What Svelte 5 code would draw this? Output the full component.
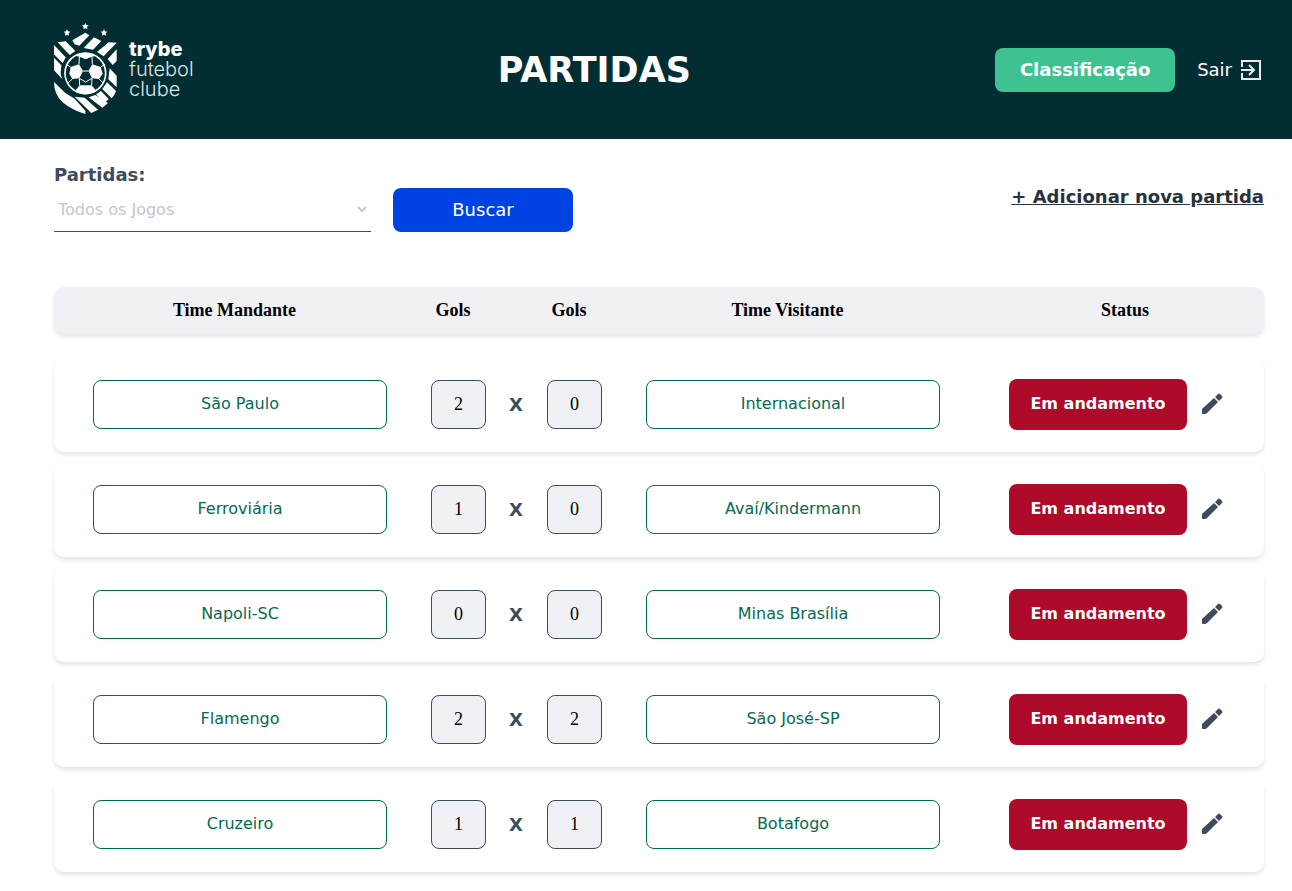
<script>
  const matches = [
    { home: 'São Paulo', homeGoals: 2, awayGoals: 0, away: 'Internacional' },
    { home: 'Ferroviária', homeGoals: 1, awayGoals: 0, away: 'Avaí/Kindermann' },
    { home: 'Napoli-SC', homeGoals: 0, awayGoals: 0, away: 'Minas Brasília' },
    { home: 'Flamengo', homeGoals: 2, awayGoals: 2, away: 'São José-SP' },
    { home: 'Cruzeiro', homeGoals: 1, awayGoals: 1, away: 'Botafogo' },
  ];
</script>

<header>
  <a class="logo" href="/" aria-label="Trybe Futebol Clube">
    <svg width="64" height="94" viewBox="42 36 192 282" fill="#fff" aria-hidden="true">
      <defs>
        <path id="star" d="M0 -10L3 -4L10 -3L5 2L6 9L0 6L-6 9L-5 2L-10 -3L-3 -4Z" />
      </defs>
      <use href="#star" x="81" y="65" />
      <use href="#star" x="136" y="46" />
      <use href="#star" x="192" y="65" />
      <path d="M97 88L136 65L148 73L118 104L104 100Z" />
      <path d="M162 79L184 90L159 116L131 111Z" />
      <path d="M206 94L230 95L191 136L171 123Z" />
      <path d="M230 115V150L218 162L203 144Z" />
      <path d="M53 94L77 91L106 120L89 132Z" />
      <path d="M42 102L77 139L68 157L42 130Z" />
      <path d="M42 140L64 163L62 188L66 204L42 178Z" />
      <path d="M42 213L76 246L104 263L136 299V309Q96 298 68 274Q42 250 42 213Z" />
      <path d="M104 257L134 260L174 296L154 306Z" />
      <path d="M146 259L166 252L204 276L187 290Z" />
      <path d="M168 250L183 240L206 264L193 277Z" />
      <path d="M187 234L201 214L228 240Q224 252 215 262Z" />
      <path d="M205 205L209 172L230 194V229Z" />
      <circle cx="136" cy="187" r="61" fill="none" stroke="#fff" stroke-width="5" />
      <path d="M92 168L117 160L129 180L118 202L97 204L88 188Z" />
      <path d="M182 168L157 160L145 180L156 202L177 204L188 188Z" />
      <path d="M119 223H155L167 238Q152 250 137 250Q121 250 107 238Z" />
      <path d="M106 134Q136 116 168 134L156 137L137 145L118 137Z" />
      <path
        d="M129 180H145M118 202L137 213L156 202M119 223L118 202M155 223L156 202M117 160L118 137M157 160L156 137M92 168L79 160M182 168L195 160M97 204L84 216M177 204L190 216"
        fill="none"
        stroke="#fff"
        stroke-width="3"
      />
    </svg>
    <span class="name"><b>trybe</b><span>futebol</span><span>clube</span></span>
  </a>
  <h1>PARTIDAS</h1>
  <nav>
    <button class="ranking" type="button">Classificação</button>
    <button class="exit" type="button">
      Sair
      <svg width="22" height="22" viewBox="0 0 22 22" fill="none" stroke="#e9edf0" stroke-width="2" aria-hidden="true">
        <path d="M2 8V2H20V20H2V14M1 11H14M9 6L14 11L9 16" />
      </svg>
    </button>
  </nav>
</header>

<main>
  <div class="toolbar">
    <form onsubmit={(e) => e.preventDefault()}>
      <div class="field">
        <label for="filter">Partidas:</label>
        <div class="select">
          <select id="filter">
            <option>Todos os Jogos</option>
            <option>Em andamento</option>
            <option>Finalizado</option>
          </select>
          <svg width="10" height="6" viewBox="0 0 10 6" fill="none" stroke="#c3c7cc" stroke-width="2" aria-hidden="true"><path d="M1 1L5 5L9 1" /></svg>
        </div>
      </div>
      <button class="search" type="submit">Buscar</button>
    </form>
    <a class="add" href="/matches/new">+ Adicionar nova partida</a>
  </div>

  <table>
    <thead>
      <tr>
        <th scope="col">Time Mandante</th>
        <th scope="col">Gols</th>
        <td></td>
        <th scope="col">Gols</th>
        <th scope="col">Time Visitante</th>
        <th scope="col" class="state">Status</th>
      </tr>
    </thead>
    <tbody>
      {#each matches as match}
        <tr>
          <td class="team"><span>{match.home}</span></td>
          <td class="goals"><span>{match.homeGoals}</span></td>
          <td class="versus">X</td>
          <td class="goals"><span>{match.awayGoals}</span></td>
          <td class="team"><span>{match.away}</span></td>
          <td class="status">
            <span>Em andamento</span>
            <button type="button" aria-label="Editar partida">
              <svg width="22" height="22" viewBox="0 0 22 22" fill="#3d4b5c" aria-hidden="true">
                <path d="M1 16L13 5L17 9L6 20Q5 21 4 21H2Q1 21 1 20ZM14 4L17 1Q18 0 19 1L21 3Q22 4 21 5L18 8Z" />
              </svg>
            </button>
          </td>
        </tr>
      {/each}
    </tbody>
  </table>
</main>

<style>
  :global(body) {
    background: #fff;
    font-family: Verdana, 'DejaVu Sans', sans-serif;
    font-size: 16px;
  }
  * { box-sizing: border-box; }
  button {
    border: 0;
    padding: 0;
    font: inherit;
    cursor: pointer;
  }
  header {
    display: flex;
    justify-content: space-between;
    align-items: center;
    min-height: 139px;
    padding: 0 30px 0 54px;
    background: #022e33;
    color: #fff;
  }
  .logo {
    display: flex;
    align-items: center;
    gap: 11px;
    color: #fff;
    text-decoration: none;
  }
  .name {
    display: flex;
    flex-direction: column;
    padding-bottom: 2px;
    font: 300 20px/20px Inter, sans-serif;
    color: #dfe5e6;
  }
  .name b { font-weight: 800; color: #fff; }
  h1 { margin: 0; font-size: 35px; line-height: 40px; }
  nav {
    display: flex;
    justify-content: flex-end;
    align-items: center;
    gap: 22px;
  }
  .ranking, .search {
    width: 180px;
    height: 44px;
    border-radius: 8px;
    color: #fff;
    font-size: 18px;
  }
  .ranking { background: #3ec28f; font-weight: 700; }
  .search { padding-bottom: 2px; background: #0043e3; }
  .exit {
    display: flex;
    align-items: center;
    gap: 8px;
    background: none;
    color: #fff;
    font-size: 18px;
  }
  main { padding: 24px 28px 24px 54px; }
  .toolbar {
    display: flex;
    justify-content: space-between;
    align-items: flex-start;
  }
  form {
    display: flex;
    align-items: flex-end;
    gap: 22px;
  }
  .field { width: 317px; }
  label {
    display: block;
    color: #3d4b5c;
    font-size: 18px;
    font-weight: 700;
    line-height: 24px;
  }
  .select {
    display: flex;
    align-items: center;
    border-bottom: 1px solid #3d4b5c;
    padding-right: 4px;
  }
  select {
    flex: 1;
    height: 44px;
    appearance: none;
    border: 0;
    padding: 0 4px;
    background: transparent;
    color: #c3c7cc;
    font: inherit;
  }
  .add {
    margin-top: 22px;
    color: #29323c;
    font-size: 18px;
    font-weight: 700;
    line-height: 24px;
  }
  table { display: block; margin-top: 55px; }
  thead, tbody { display: grid; gap: 11px; }
  tbody { margin-top: 24px; }
  tr {
    display: grid;
    grid-template-columns: 361fr 76fr 40fr 76fr 361fr 296fr;
    align-items: center;
    padding-bottom: 2px;
    border-radius: 10px;
    box-shadow: 0 3px 4px rgba(0, 0, 0, 0.1);
  }
  th, td { padding: 0; }
  thead tr { height: 47px; background: #f0f1f5; }
  th {
    font: 700 18px/24px 'Liberation Serif', 'Times New Roman', serif;
    text-align: center;
  }
  .state { padding-left: 18px; }
  tbody tr { height: 94px; }
  .team { padding: 0 28px 0 39px; }
  .goals { padding: 0 5px 0 16px; }
  .team span, .goals span {
    display: block;
    border: 1px solid #3d4b5c;
    border-radius: 8px;
    text-align: center;
    line-height: 47px;
  }
  .team span {
    border-color: #036b52;
    padding-bottom: 2px;
    color: #036b52;
    line-height: 45px;
  }
  .goals span {
    background: #f0f1f5;
    font-family: 'Liberation Serif', 'Times New Roman', serif;
    font-size: 18px;
  }
  .versus {
    padding-left: 10px;
    color: #3d4b5c;
    font-size: 18px;
    font-weight: 700;
    text-align: center;
  }
  .status {
    display: flex;
    align-items: center;
    gap: 14px;
    padding-left: 41px;
  }
  .status span {
    width: 178px;
    border-radius: 8px;
    padding-bottom: 2px;
    background: #ae0a29;
    color: #fff;
    font-weight: 700;
    line-height: 49px;
    text-align: center;
  }
  .status button { display: flex; background: none; }
</style>
